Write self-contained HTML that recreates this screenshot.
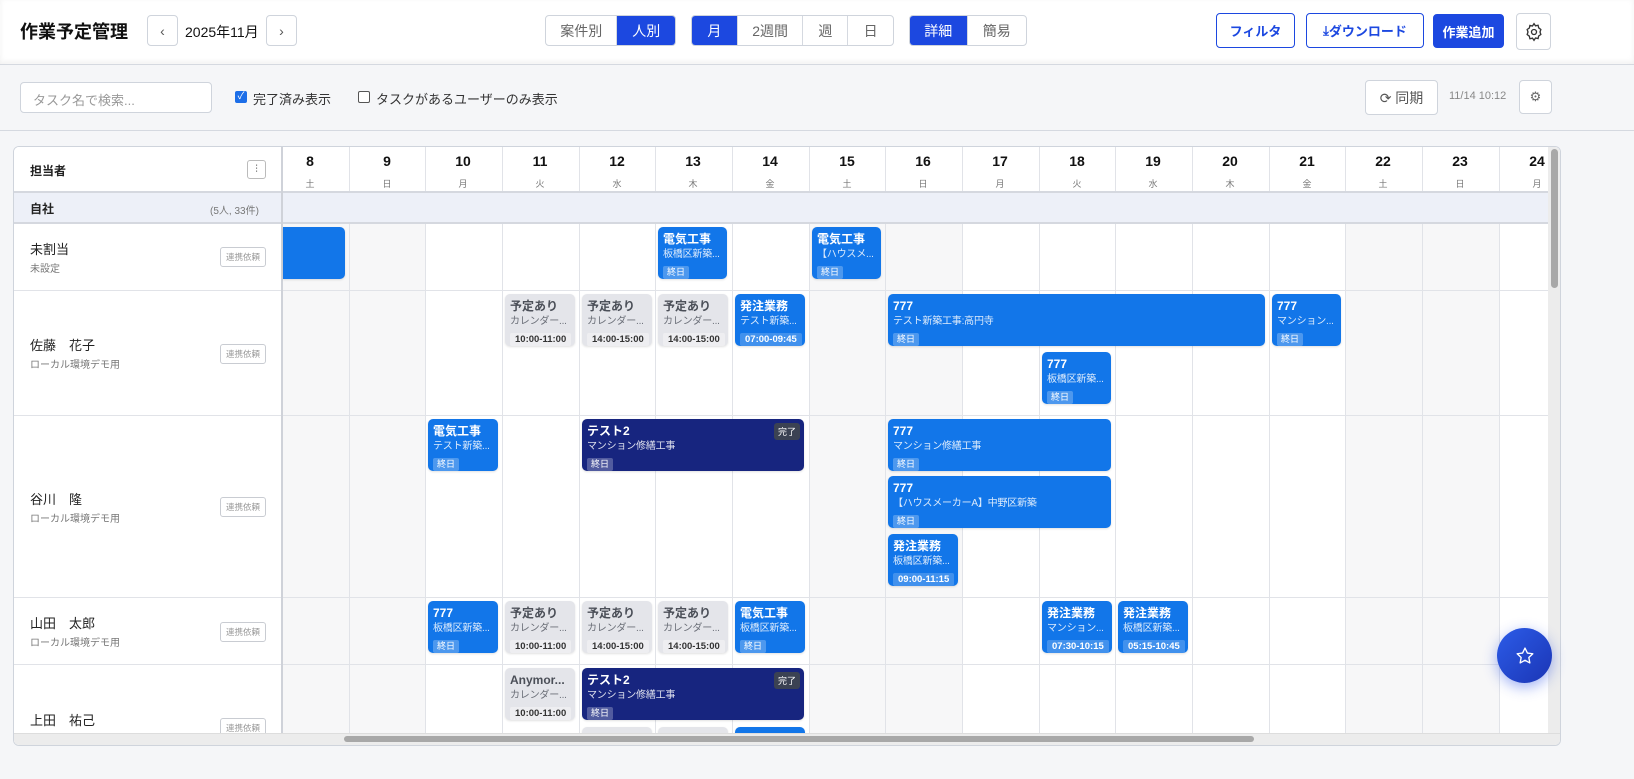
<!DOCTYPE html>
<html><head><meta charset="utf-8"><style>
*{box-sizing:border-box;margin:0;padding:0}
body{width:1634px;height:779px;overflow:hidden;background:#f5f6f8;font-family:"Liberation Sans","Noto Sans CJK JP",sans-serif;color:#1f2937;position:relative}
.hdr{position:absolute;left:0;top:0;width:1634px;height:65px;background:#fff;border-bottom:1px solid #d5d9e0;box-shadow:0 -2px 6px rgba(0,0,0,.06) inset}
.a{position:absolute}
.btn{position:absolute;border:1px solid #cfd4dc;border-radius:4px;background:#fff;display:flex;align-items:center;justify-content:center;font-size:14px;color:#555}
.seg{position:absolute;top:15px;height:31px;border:1px solid #cfd4dc;border-radius:4px;display:flex;overflow:hidden;background:#fff}
.seg div{display:flex;align-items:center;justify-content:center;font-size:14px;color:#666;border-right:1px solid #d5d9e0}
.seg div:last-child{border-right:none}
.seg .on{background:#1c48e0;color:#fff}
.grid{position:absolute;left:13px;top:146px;width:1548px;height:600px;background:#fff;border:1px solid #cfd4dc;border-radius:6px;overflow:hidden}
.vl{position:absolute;top:0;width:1px;background:#e1e3e8;height:600px}
.we{position:absolute;top:76px;height:530px;background:#f7f7f8}
.hl{position:absolute;left:0;height:1px;background:#e1e3e8;width:1548px}
.dn{position:absolute;top:6px;width:76px;text-align:center;font-size:14px;font-weight:bold;color:#111}
.dw{position:absolute;top:30px;width:76px;text-align:center;font-size:9px;color:#777}
.nm{position:absolute;left:16px;font-size:13px;color:#222}
.sb{position:absolute;left:16px;font-size:10px;color:#777}
.rq{position:absolute;left:206px;width:46px;height:20px;border:1px solid #c9ccd2;border-radius:3px;font-size:8.5px;color:#999;display:flex;align-items:center;justify-content:center;background:#fff}
.c{position:absolute;border-radius:5px;background:#1276e9;color:#fff;padding:4px 5px;overflow:hidden;white-space:nowrap;box-shadow:0 1px 2px rgba(0,0,0,.12)}
.c b{display:block;font-size:12px;line-height:16px}
.c s{display:block;text-decoration:none;font-size:10px;line-height:15px;opacity:.85;overflow:hidden;text-overflow:ellipsis;letter-spacing:-.2px}
.c i{display:inline-block;font-style:normal;font-size:9px;line-height:13px;background:rgba(255,255,255,.25);padding:0 4px;border-radius:2px}
.c em{display:inline-block;font-style:normal;font-size:9.5px;font-weight:bold;line-height:13px;background:rgba(255,255,255,.2);padding:0 5px;border-radius:2px}
.g{background:#e4e5ea;color:#4b4f58}
.g b{color:#4b4f58}
.g s{color:#6b6f78;opacity:1}
.g em{background:#eeeef1;color:#333}
.n{background:#17257f}
.dz{position:absolute;right:4px;top:4px;background:#3b4253;font-size:9px;padding:2px 4px;border-radius:3px}
</style></head><body>
<div class="hdr"></div>
<div class="a" style="left:20px;top:18px;font-size:18px;font-weight:bold;color:#111">作業予定管理</div>
<div class="btn" style="left:147px;top:15px;width:31px;height:31px">‹</div>
<div class="a" style="left:185px;top:22px;font-size:14px;color:#111">2025年11月</div>
<div class="btn" style="left:266px;top:15px;width:31px;height:31px">›</div>
<div class="seg" style="left:545px;width:131px"><div style="width:72px">案件別</div><div class="on" style="width:58px">人別</div></div>
<div class="seg" style="left:691px;width:203px"><div class="on" style="width:46px">月</div><div style="width:66px">2週間</div><div style="width:45px">週</div><div style="width:45px">日</div></div>
<div class="seg" style="left:909px;width:118px"><div class="on" style="width:58px">詳細</div><div style="width:59px">簡易</div></div>
<div class="btn" style="left:1216px;top:13px;width:79px;height:35px;border-color:#1c48e0;color:#1c48e0;font-weight:bold;font-size:13px">フィルタ</div>
<div class="btn" style="left:1306px;top:13px;width:118px;height:35px;border-color:#1c48e0;color:#1c48e0;font-weight:bold;font-size:13px"><span style="font-size:13px">⤓</span>ダウンロード</div>
<div class="btn" style="left:1433px;top:14px;width:71px;height:34px;background:#1c48e0;border-color:#1c48e0;color:#fff;font-weight:bold;font-size:13px">作業追加</div>
<div class="btn" style="left:1516px;top:13px;width:35px;height:37px"><svg width="20" height="20" viewBox="0 0 24 24" fill="none" stroke="#333" stroke-width="1.6"><circle cx="12" cy="12" r="3"/><path d="M12 2l1.8 2.6 3.1-.7.7 3.1L20.2 9l-1 3 1 3-2.6 1.8-.7 3.1-3.1-.7L12 22l-1.8-2.6-3.1.7-.7-3.1L3.8 15l1-3-1-3 2.6-1.8.7-3.1 3.1.7z"/></svg></div>

<div class="a" style="left:20px;top:82px;width:192px;height:31px;background:#fff;border:1px solid #cfd4dc;border-radius:4px;font-size:13px;color:#999;padding:7px 12px">タスク名で検索...</div>
<div class="a" style="left:235px;top:91px;width:12px;height:12px;background:#1c6ee8;border-radius:2px;color:#fff;font-size:10px;line-height:12px;text-align:center">✓</div>
<div class="a" style="left:253px;top:89px;font-size:13px;color:#333">完了済み表示</div>
<div class="a" style="left:358px;top:91px;width:12px;height:12px;border:1px solid #555;border-radius:2px;background:#fff"></div>
<div class="a" style="left:376px;top:89px;font-size:13px;color:#333">タスクがあるユーザーのみ表示</div>
<div class="btn" style="left:1365px;top:80px;width:73px;height:35px;font-size:14px;color:#555">⟳&nbsp;同期</div>
<div class="a" style="left:1449px;top:90px;font-size:11px;color:#888">11/14 10:12</div>
<div class="btn" style="left:1519px;top:80px;width:33px;height:34px;font-size:13px;color:#666">⚙</div>
<div class="a" style="left:0;top:130px;width:1634px;height:1px;background:#d5d9e0"></div>

<div class="grid">
 <div class="we" style="left:269px;width:66px"></div><div class="we" style="left:335px;width:77px"></div>
 <div class="we" style="left:795px;width:154px"></div>
 <div class="we" style="left:1332px;width:153px"></div>
 <div class="a" style="left:0;top:0;width:1548px;height:45px;background:#fff"></div>
 <div class="hl" style="top:143px"></div>
 <div class="hl" style="top:268px"></div>
 <div class="hl" style="top:450px"></div>
 <div class="hl" style="top:517px"></div>
 <div class="vl" style="left:335px"></div><div class="vl" style="left:411px"></div><div class="vl" style="left:488px"></div><div class="vl" style="left:565px"></div><div class="vl" style="left:641px"></div><div class="vl" style="left:718px"></div><div class="vl" style="left:795px"></div><div class="vl" style="left:871px"></div><div class="vl" style="left:948px"></div><div class="vl" style="left:1025px"></div><div class="vl" style="left:1101px"></div><div class="vl" style="left:1178px"></div><div class="vl" style="left:1255px"></div><div class="vl" style="left:1331px"></div><div class="vl" style="left:1408px"></div><div class="vl" style="left:1485px"></div>
 <!-- group band covers lines -->
 <div class="a" style="left:0;top:45px;width:1548px;height:31px;background:#edf0f8"></div>
 <div class="hl" style="top:44px;height:2px;background:#d5d8df"></div>
 <div class="hl" style="top:75px;height:2px;background:#d5d8df"></div>
 <!-- left column -->
 <div class="a" style="left:0;top:0;width:268px;height:600px;background:#fff"></div>
 <div class="a" style="left:0;top:45px;width:268px;height:31px;background:#edf0f8"></div>
 <div class="hl" style="top:44px;height:2px;width:268px;background:#d5d8df"></div>
 <div class="hl" style="top:75px;height:2px;width:268px;background:#d5d8df"></div>
 <div class="hl" style="top:143px;width:268px"></div><div class="hl" style="top:268px;width:268px"></div><div class="hl" style="top:450px;width:268px"></div><div class="hl" style="top:517px;width:268px"></div>
 <div class="a" style="left:267px;top:0;width:2px;height:600px;background:#cfd2d9"></div>
 <div class="a" style="left:16px;top:15px;font-size:12px;font-weight:bold;color:#222">担当者</div>
 <div class="a" style="left:233px;top:13px;width:19px;height:19px;border:1px solid #bbb;border-radius:3px;font-size:10px;text-align:center;line-height:17px;color:#444">⫶</div>
 <div class="a" style="left:16px;top:53px;font-size:12px;font-weight:bold;color:#222">自社</div>
 <div class="a" style="left:196px;top:55px;font-size:10px;color:#777">(5人, 33件)</div>
 <div class="nm" style="top:92px">未割当</div><div class="sb" style="top:113px">未設定</div><div class="rq" style="top:100px">連携依頼</div>
 <div class="nm" style="top:188px">佐藤　花子</div><div class="sb" style="top:209px">ローカル環境デモ用</div><div class="rq" style="top:197px">連携依頼</div>
 <div class="nm" style="top:342px">谷川　隆</div><div class="sb" style="top:363px">ローカル環境デモ用</div><div class="rq" style="top:350px">連携依頼</div>
 <div class="nm" style="top:466px">山田　太郎</div><div class="sb" style="top:487px">ローカル環境デモ用</div><div class="rq" style="top:475px">連携依頼</div>
 <div class="nm" style="top:563px">上田　祐己</div><div class="rq" style="top:571px">連携依頼</div>
 <div class="dn" style="left:258px">8</div><div class="dw" style="left:258px">土</div>
 <div class="dn" style="left:335px">9</div><div class="dw" style="left:335px">日</div>
 <div class="dn" style="left:411px">10</div><div class="dw" style="left:411px">月</div>
 <div class="dn" style="left:488px">11</div><div class="dw" style="left:488px">火</div>
 <div class="dn" style="left:565px">12</div><div class="dw" style="left:565px">水</div>
 <div class="dn" style="left:641px">13</div><div class="dw" style="left:641px">木</div>
 <div class="dn" style="left:718px">14</div><div class="dw" style="left:718px">金</div>
 <div class="dn" style="left:795px">15</div><div class="dw" style="left:795px">土</div>
 <div class="dn" style="left:871px">16</div><div class="dw" style="left:871px">日</div>
 <div class="dn" style="left:948px">17</div><div class="dw" style="left:948px">月</div>
 <div class="dn" style="left:1025px">18</div><div class="dw" style="left:1025px">火</div>
 <div class="dn" style="left:1101px">19</div><div class="dw" style="left:1101px">水</div>
 <div class="dn" style="left:1178px">20</div><div class="dw" style="left:1178px">木</div>
 <div class="dn" style="left:1255px">21</div><div class="dw" style="left:1255px">金</div>
 <div class="dn" style="left:1331px">22</div><div class="dw" style="left:1331px">土</div>
 <div class="dn" style="left:1408px">23</div><div class="dw" style="left:1408px">日</div>
 <div class="dn" style="left:1485px">24</div><div class="dw" style="left:1485px">月</div>

 <div class="c" style="left:269px;top:80px;width:62px;height:52px;border-radius:0 5px 5px 0"></div>
 <div class="c" style="left:644px;top:80px;width:69px;height:52px"><b>電気工事</b><s>板橋区新築...</s><i>終日</i></div>
 <div class="c" style="left:798px;top:80px;width:69px;height:52px"><b>電気工事</b><s>【ハウスメ...</s><i>終日</i></div>

 <div class="c g" style="left:491px;top:147px;width:70px;height:52px"><b>予定あり</b><s>カレンダー...</s><em>10:00-11:00</em></div>
 <div class="c g" style="left:568px;top:147px;width:70px;height:52px"><b>予定あり</b><s>カレンダー...</s><em>14:00-15:00</em></div>
 <div class="c g" style="left:644px;top:147px;width:70px;height:52px"><b>予定あり</b><s>カレンダー...</s><em>14:00-15:00</em></div>
 <div class="c" style="left:721px;top:147px;width:70px;height:52px"><b>発注業務</b><s>テスト新築...</s><em>07:00-09:45</em></div>
 <div class="c" style="left:874px;top:147px;width:377px;height:52px"><b>777</b><s>テスト新築工事:高円寺</s><i>終日</i></div>
 <div class="c" style="left:1258px;top:147px;width:69px;height:52px"><b>777</b><s>マンション...</s><i>終日</i></div>
 <div class="c" style="left:1028px;top:205px;width:69px;height:52px"><b>777</b><s>板橋区新築...</s><i>終日</i></div>

 <div class="c" style="left:414px;top:272px;width:70px;height:52px"><b>電気工事</b><s>テスト新築...</s><i>終日</i></div>
 <div class="c n" style="left:568px;top:272px;width:222px;height:52px"><b>テスト2</b><s>マンション修繕工事</s><i>終日</i><span class="dz">完了</span></div>
 <div class="c" style="left:874px;top:272px;width:223px;height:52px"><b>777</b><s>マンション修繕工事</s><i>終日</i></div>
 <div class="c" style="left:874px;top:329px;width:223px;height:52px"><b>777</b><s>【ハウスメーカーA】中野区新築</s><i>終日</i></div>
 <div class="c" style="left:874px;top:387px;width:70px;height:52px"><b>発注業務</b><s>板橋区新築...</s><em>09:00-11:15</em></div>

 <div class="c" style="left:414px;top:454px;width:70px;height:52px"><b>777</b><s>板橋区新築...</s><i>終日</i></div>
 <div class="c g" style="left:491px;top:454px;width:70px;height:52px"><b>予定あり</b><s>カレンダー...</s><em>10:00-11:00</em></div>
 <div class="c g" style="left:568px;top:454px;width:70px;height:52px"><b>予定あり</b><s>カレンダー...</s><em>14:00-15:00</em></div>
 <div class="c g" style="left:644px;top:454px;width:70px;height:52px"><b>予定あり</b><s>カレンダー...</s><em>14:00-15:00</em></div>
 <div class="c" style="left:721px;top:454px;width:70px;height:52px"><b>電気工事</b><s>板橋区新築...</s><i>終日</i></div>
 <div class="c" style="left:1028px;top:454px;width:70px;height:52px"><b>発注業務</b><s>マンション...</s><em>07:30-10:15</em></div>
 <div class="c" style="left:1104px;top:454px;width:70px;height:52px"><b>発注業務</b><s>板橋区新築...</s><em>05:15-10:45</em></div>

 <div class="c g" style="left:491px;top:521px;width:70px;height:52px"><b>Anymor...</b><s>カレンダー...</s><em>10:00-11:00</em></div>
 <div class="c n" style="left:568px;top:521px;width:222px;height:52px"><b>テスト2</b><s>マンション修繕工事</s><i>終日</i><span class="dz">完了</span></div>
 <div class="c g" style="left:568px;top:580px;width:70px;height:30px"></div>
 <div class="c g" style="left:644px;top:580px;width:70px;height:30px"></div>
 <div class="c" style="left:721px;top:580px;width:70px;height:30px"></div>
 <div class="a" style="left:0;top:586px;width:1548px;height:14px;background:#ececec;border-top:1px solid #ddd"></div>
 <div class="a" style="left:330px;top:589px;width:910px;height:6px;background:#a8a8a8;border-radius:3px"></div>
 <div class="a" style="left:1534px;top:0;width:14px;height:586px;background:#ececec"></div>
 <div class="a" style="left:1537px;top:2px;width:7px;height:139px;background:#a8a8a8;border-radius:4px"></div>
</div>
<div class="a" style="left:1497px;top:628px;width:55px;height:55px;border-radius:50%;background:linear-gradient(135deg,#2c5ce8,#1b35b5);box-shadow:0 4px 14px rgba(40,80,230,.45);display:flex;align-items:center;justify-content:center">
<svg width="20" height="20" viewBox="0 0 24 24" fill="none" stroke="#fff" stroke-width="1.6" stroke-linejoin="round"><path d="M12 2.5l2.9 6 6.5.8-4.8 4.5 1.2 6.5L12 17.1l-5.8 3.2 1.2-6.5L2.6 9.3l6.5-.8z"/></svg></div>
</body></html>
